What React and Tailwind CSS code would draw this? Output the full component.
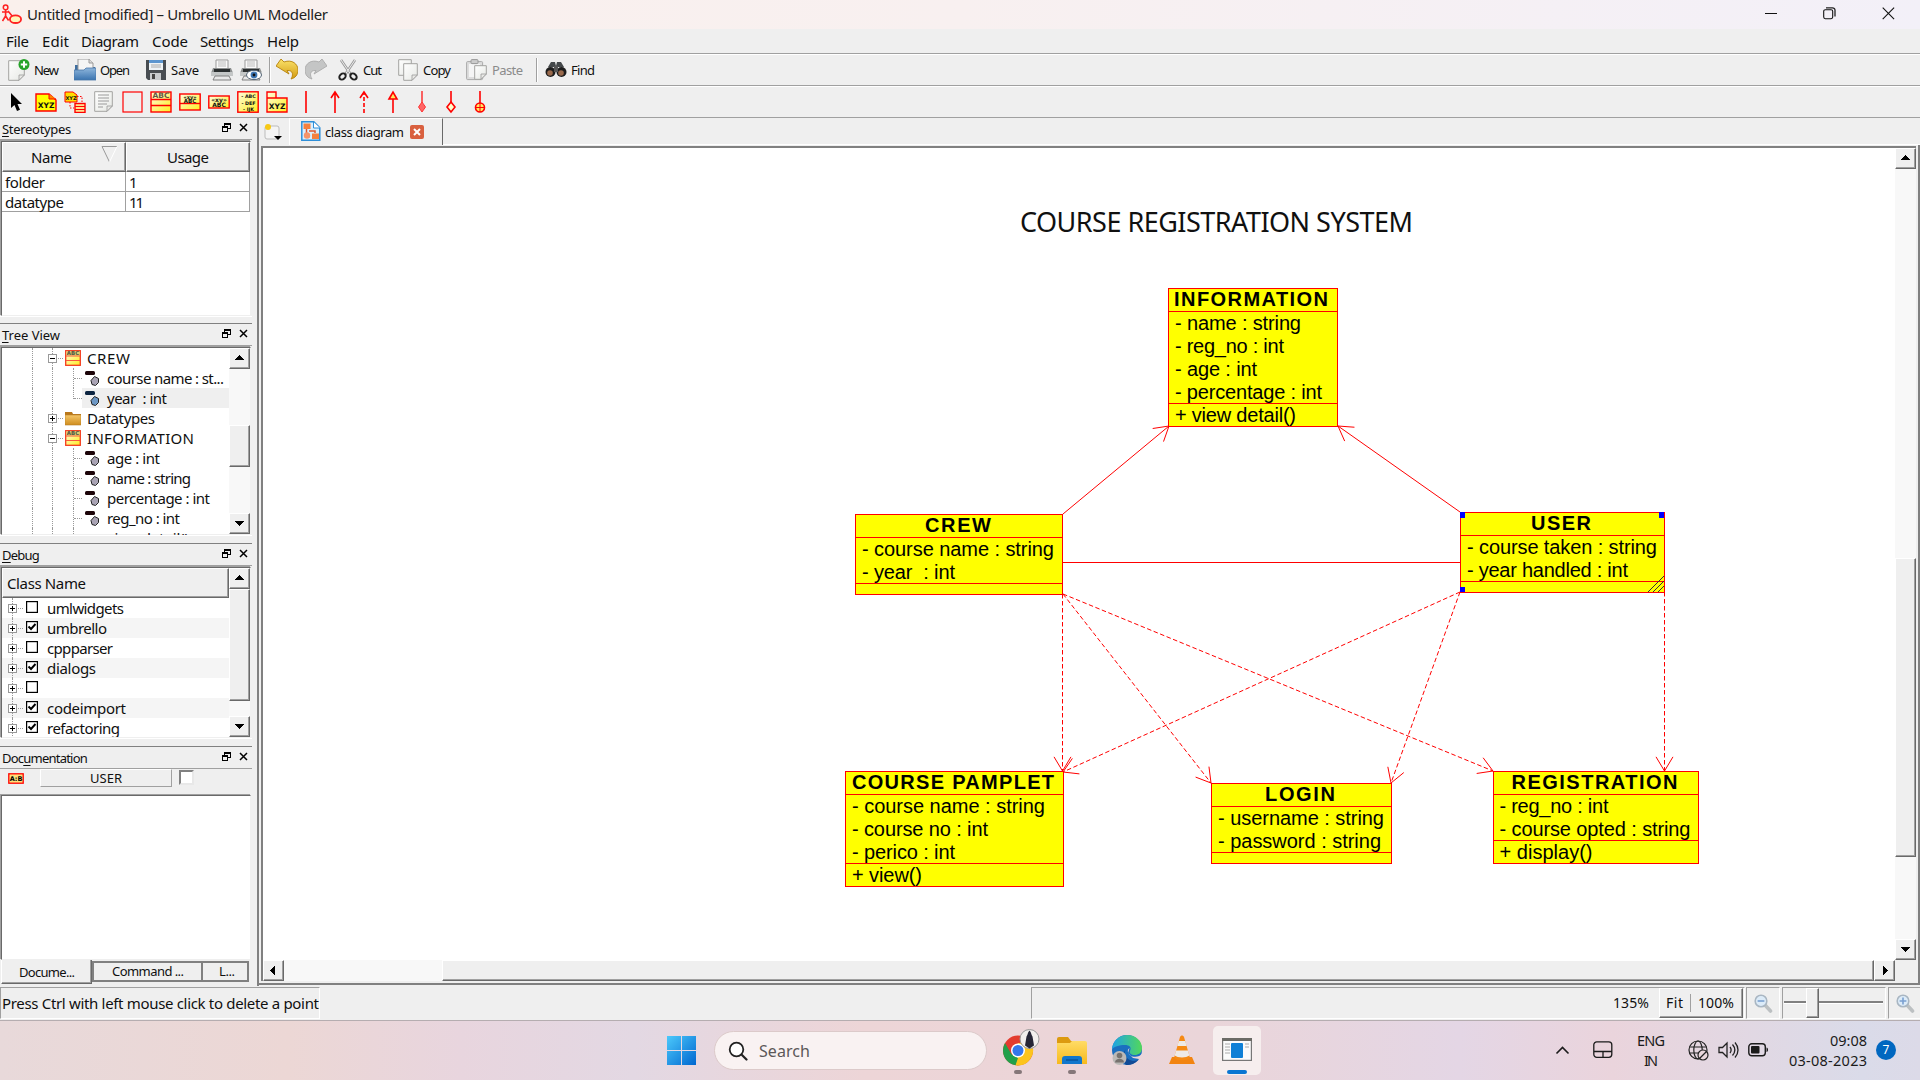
import React, { useLayoutEffect, useRef, useState } from "react";

/* Text run whose tracking is tuned so that it fills exactly `w` pixels. */
function Fit({ w, className = "", children }) {
  const ref = useRef(null);
  const [ls, setLs] = useState(0);
  useLayoutEffect(() => {
    const n = String(children).length;
    const nat = ref.current.getBoundingClientRect().width;
    setLs((w - nat) / Math.max(1, n - 1));
  }, []);
  return (
    <span className={"inline-block shrink-0 whitespace-pre " + className} style={{ width: w }}>
      <span ref={ref} style={{ letterSpacing: ls }}>{children}</span>
    </span>
  );
}

const RAISED = "bg-[#efefef] border border-t-[#fff] border-l-[#fff] border-r-[#696969] border-b-[#696969] shadow-[inset_-1px_-1px_0_#a0a0a0]";
const SUNKEN = "border border-t-[#a0a0a0] border-l-[#a0a0a0] border-r-white border-b-white";
const TRACK = "bg-[#f8f8f8]";

const Tri = ({ dir }) => (
  <svg width="11" height="11" viewBox="0 0 11 11" shapeRendering="crispEdges">
    <path fill="#000" d={{ up: "M5 2h1l4 5H1z", down: "M1 3h9L6 8H5z", left: "M7 1v9L2 6V5z", right: "M4 1v9l5-4V5z" }[dir]} />
  </svg>
);
const Arrow = ({ dir, className = "h-[21px] w-[21px]" }) => (
  <div className={"flex shrink-0 items-center justify-center pr-px pb-px " + RAISED + " " + className}><Tri dir={dir} /></div>
);

/* ---------- toolbar icons ---------- */
const Svg = ({ w = 22, h = 22, ml, children, vb }) => (
  <svg className={"shrink-0 " + (ml || "")} width={w} height={h} viewBox={vb || `0 0 ${w} ${h}`}>{children}</svg>
);
const XYZ = ({ x, y, s = 7, children }) => (
  <text x={x} y={y} fontSize={s} fontWeight="700" fontFamily='"DejaVu Sans"' fill="#111" textAnchor="middle">{children}</text>
);
const ClassIcon = ({ size = 22, ml }) => (
  <Svg w={size} h={size} vb="0 0 22 22" ml={ml}>
    <rect x="1" y="1" width="20" height="20" fill="url(#yl)" stroke="#f00" strokeWidth="1.4" />
    <path d="M1 8.500h20M1 14.500h20" stroke="#f00" strokeWidth="1.300" />
    <text x="11" y="7.300" fontSize="7.500" fontFamily='"DejaVu Sans"' fontWeight="700" fill="#654" textAnchor="middle">ABC</text>
  </Svg>
);
const SmallClass = () => (
  <svg width="16" height="16">
    <rect x=".7" y=".7" width="14.600" height="14.600" fill="url(#yl)" stroke="#f43b1e" strokeWidth="1.300" />
    <path d="M1.400 1.400h13.200v4H1.400z" fill="#d9cf70" /><path d="M1 6h14M1 10.500h14" stroke="#f8593c" />
    <text x="8" y="5.300" fontSize="5.500" fontFamily='"DejaVu Sans"' fontWeight="700" fill="#554" textAnchor="middle">ABC</text>
  </svg>
);
const Page = ({ x = 0, y = 0, w = 16, h = 20 }) => (
  <g transform={`translate(${x} ${y})`}>
    <path d={`M.7 .7H${w - 0.7}V${h - 6}L${w - 6} ${h - 0.7}H.7z`} fill="url(#pg)" stroke="#a3a3a0" />
    <path d={`M${w - 0.7} ${h - 6}h-5.300v5.300z`} fill="#e9e9e6" stroke="#999" strokeWidth=".8" />
  </g>
);
const Printer = () => (
  <g>
    <path d="M5 1h12v9H5z" fill="#fafafa" stroke="#999" />
    <path d="M7 3h8M7 5h8M7 7h8" stroke="#bbb" />
    <path d="M2 9h18l2 5v3H0v-3z" fill="#8d9090" />
    <path d="M0 13h22v4H0z" fill="#c4c7c7" />
    <path d="M3 10h16v3H3z" fill="#2b2f30" />
    <path d="M4 17h14l2 4H2z" fill="#e8e8e8" stroke="#777" strokeWidth=".9" />
  </g>
);
const Magnifier = ({ plus }) => (
  <svg width="19" height="19" viewBox="0 0 19 19">
    <path d="M11 11l5.500 6" stroke="#bcc0c2" strokeWidth="3.600" strokeLinecap="round" />
    <circle cx="7" cy="7" r="5.800" fill="#dcebf8" stroke="#a9b6c2" strokeWidth="1.600" />
    <path d={plus ? "M7 3.600v6.800M3.600 7h6.800" : "M3.600 7h6.800"} stroke="#7aa0d0" strokeWidth="1.600" />
  </svg>
);

function Defs() {
  return (
    <svg width="0" height="0" className="absolute">
      <defs>
        <linearGradient id="yl" x1="0" y1="0" x2="1" y2="1"><stop offset="0" stopColor="#fffde0" /><stop offset="1" stopColor="#ffee20" /></linearGradient>
        <linearGradient id="pg" x1="0" y1="0" x2="1" y2="1"><stop offset="0" stopColor="#fff" /><stop offset="1" stopColor="#e6e8e4" /></linearGradient>
        <linearGradient id="fo" x1="0" y1="0" x2="0" y2="1"><stop offset="0" stopColor="#8fb6dc" /><stop offset="1" stopColor="#3b74b0" /></linearGradient>
        <linearGradient id="un" x1="0" y1="0" x2="0" y2="1"><stop offset="0" stopColor="#fbe36b" /><stop offset="1" stopColor="#d39a10" /></linearGradient>
        <linearGradient id="fy" x1="0" y1="0" x2="0" y2="1"><stop offset="0" stopColor="#f5c668" /><stop offset="1" stopColor="#cf8d1f" /></linearGradient>
        <linearGradient id="wn" x1="0" y1="0" x2="1" y2="1"><stop offset="0" stopColor="#4cc9fb" /><stop offset="1" stopColor="#0067d0" /></linearGradient>
        <linearGradient id="ed" x1="0" y1="0" x2="1" y2="0"><stop offset="0" stopColor="#1fa3e6" /><stop offset="1" stopColor="#52d85a" /></linearGradient>
        <linearGradient id="fw" x1="0" y1="0" x2="0" y2="1"><stop offset="0" stopColor="#ffdc66" /><stop offset="1" stopColor="#f7b91c" /></linearGradient>
      </defs>
    </svg>
  );
}

function TitleBar() {
  return (
    <div className="flex h-[29px] items-center bg-gradient-to-r from-[#faf0ec] via-[#f8f0f0] to-[#f3f0f8] pb-[2px]">
      <Svg w={20} h={20} ml="ml-[2px]">
        <circle cx="3.6" cy="3.4" r="2.3" fill="none" stroke="#f22" strokeWidth="1.5" />
        <path d="M3.6 6v6M0 8h7M3.6 12L.5 17M3.6 12l3 4.500M6 7l5 6" stroke="#f22" strokeWidth="1.6" fill="none" />
        <ellipse cx="13.5" cy="15.2" rx="5.6" ry="3.8" fill="#fff6b8" stroke="#f22" strokeWidth="1.8" />
      </Svg>
      <Fit w={301} className="ml-[5px] text-[15px] leading-[26px] text-[#222]">Untitled [modified] – Umbrello UML Modeller</Fit>
      <div className="ml-auto flex items-center">
        <Svg w={12} h={12} ml="mr-[46px]"><path d="M0 5.500h12" stroke="#111" /></Svg>
        <Svg w={13} h={13} ml="mr-[46px]">
          <rect x=".7" y="2.7" width="9" height="9" rx="1.6" fill="none" stroke="#111" strokeWidth="1.1" />
          <path d="M3 .8h6.500a2.500 2.500 0 0 1 2.500 2.500V9.500" fill="none" stroke="#222" strokeWidth="1.3" />
        </Svg>
        <Svg w={13} h={13} ml="mr-[25px]"><path d="M.7.7l11.400 11.400M12.100.7L.7 12.100" stroke="#111" strokeWidth="1.1" /></Svg>
      </div>
    </div>
  );
}

function MenuBar() {
  const c = "text-[15px] leading-[24px]";
  return (
    <div className="flex h-[24px] pl-[6px]">
      <Fit w={23} className={c}>File</Fit>
      <Fit w={27} className={c + " ml-[13px]"}>Edit</Fit>
      <Fit w={58} className={c + " ml-[12px]"}>Diagram</Fit>
      <Fit w={36} className={c + " ml-[13px]"}>Code</Fit>
      <Fit w={54} className={c + " ml-[12px]"}>Settings</Fit>
      <Fit w={32} className={c + " ml-[13px]"}>Help</Fit>
    </div>
  );
}

function MainToolbar() {
  const c = "text-[13px] leading-[30px]";
  return (
    <div className="flex h-[32px] items-center border-t border-[#a0a0a0] shadow-[inset_0_1px_0_#fff]">
      <Svg ml="ml-[8px]">
        <Page w={17} h={21} y={1} />
        <circle cx="16" cy="5.5" r="5.5" fill="#26a32a" /><path d="M16 2.300v6.400M12.800 5.500h6.400" stroke="#fff" strokeWidth="2" />
      </Svg>
      <Fit w={25} className={c + " ml-[4px]"}>New</Fit>
      <Svg ml="ml-[15px]">
        <path d="M1 6h6l2 2h12v12H1z" fill="#3f6e9f" />
        <path d="M4 0h11l4 4v10H4z" fill="#f5f5f5" stroke="#999" /><path d="M15 0v4h4" fill="#ddd" stroke="#999" />
        <path d="M0 11h10l2-2h10v12H0z" fill="url(#fo)" stroke="#4a77a8" strokeWidth=".8" />
      </Svg>
      <Fit w={30} className={c + " ml-[4px]"}>Open</Fit>
      <Svg w={20} ml="ml-[16px]">
        <path d="M0 1h20v20H2l-2-2z" fill="#484d52" /><path d="M3 1h14v10H3z" fill="#eef3f6" />
        <path d="M3 1h14v3H3z" fill="#5b95cf" /><path d="M5 6h10M5 8h10" stroke="#aaa" />
        <path d="M4 14h11v7H4z" fill="#c9cccf" /><path d="M6 15h3v5H6z" fill="#444" />
      </Svg>
      <Fit w={28} className={c + " ml-[5px]"}>Save</Fit>
      <Svg ml="ml-[12px]"><Printer /></Svg>
      <Svg ml="ml-[7px]"><Printer /><ellipse cx="14" cy="16" rx="7.5" ry="4.6" fill="#fff" stroke="#567" /><circle cx="14" cy="16" r="3.4" fill="#3d76b4" /><circle cx="14" cy="16" r="1.4" fill="#111" /></Svg>
      <span className="ml-[7px] h-[26px] w-[2px] border-l border-[#a0a0a0] bg-white" />
      <Svg ml="ml-[5px]"><path transform="translate(0 -1)" d="M0 8L5 1l3 3c8-3 14 2 14 8 0 5-3 8-7 9 2-3 3-9-4-8.500l2 3.500z" fill="url(#un)" stroke="#b5810a" strokeWidth=".9" /></Svg>
      <Svg ml="ml-[7px]"><path transform="translate(0 -1)" d="M22 8l-5-7-3 3C6 1 0 6 0 12c0 5 3 8 7 9-2-3-3-9 4-8.500L9 16z" fill="#c4c5c5" stroke="#aaa" strokeWidth=".9" /></Svg>
      <Svg w={20} ml="ml-[11px]">
        <path d="M3 1l9.500 14M17 1L7.500 15" stroke="#999" strokeWidth="2.600" /><path d="M3 1l9.500 14M17 1L7.500 15" stroke="#eee" strokeWidth="1" />
        <ellipse cx="4.500" cy="17.500" rx="3.500" ry="2.700" fill="none" stroke="#222" strokeWidth="2" transform="rotate(-40 4.500 17.500)" />
        <ellipse cx="15.500" cy="17.500" rx="3.500" ry="2.700" fill="none" stroke="#222" strokeWidth="2" transform="rotate(40 15.500 17.500)" />
      </Svg>
      <Fit w={19} className={c + " ml-[5px]"}>Cut</Fit>
      <Svg w={20} ml="ml-[16px]"><Page w={14} h={17} /><Page x={5} y={4} w={15} h={18} /></Svg>
      <Fit w={28} className={c + " ml-[5px]"}>Copy</Fit>
      <Svg ml="ml-[15px]">
        <rect x=".6" y="2.6" width="16" height="18" rx="1" fill="#ddd" stroke="#aaa" /><rect x="3" y="5" width="11" height="13" fill="#f5f5f5" />
        <rect x="5" y=".6" width="7" height="4" rx="1" fill="#ccc" stroke="#999" /><Page x={8} y={6} w={13} h={15} />
      </Svg>
      <Fit w={31} className={c + " ml-[4px] text-[#8b8b8b]"}>Paste</Fit>
      <span className="ml-[13px] h-[24px] w-[2px] border-l border-[#a0a0a0] bg-white" />
      <Svg ml="ml-[7px]">
        <path d="M3 8L6 3h4l1 4 1-4h4l3 5z" fill="#44484a" />
        <circle cx="5.500" cy="13" r="5" fill="#1d1d1d" /><circle cx="16.500" cy="13" r="5" fill="#1d1d1d" />
        <circle cx="5" cy="14" r="2.800" fill="#9a6a4c" /><circle cx="16" cy="14" r="2.800" fill="#9a6a4c" /><path d="M9 7h4v6H9z" fill="#555" />
      </Svg>
      <Fit w={24} className={c + " ml-[4px]"}>Find</Fit>
    </div>
  );
}

const Stem = ({ children }) => <Svg w={14} h={24} ml="ml-[15px]">{children}</Svg>;

function UmlToolbar() {
  const r = { stroke: "#f00", strokeWidth: 1.6, fill: "none" };
  return (
    <div className="flex h-[32px] items-center border-t border-[#a0a0a0] shadow-[inset_0_1px_0_#fff]">
      <Svg w={14} h={20} ml="ml-[10px]"><path d="M1 1v15l3.500-3 2.500 6 3-1.300-2.500-5.700H12z" fill="#000" /></Svg>
      <Svg ml="ml-[11px]"><path d="M1 3h13l7 6v11H1z" fill="#ff0" stroke="#f00" strokeWidth="1.400" /><path d="M14 3v5h7" fill="#f80" stroke="#f00" /><XYZ x="11" y="16.500" s="7.500">XYZ</XYZ></Svg>
      <Svg ml="ml-[7px]">
        <path d="M1 1h8l4 3v7H1z" fill="#fd0" stroke="#f00" /><XYZ x="7" y="9" s="5">XYZ</XYZ>
        <path d="M13 5.500h5V12M6 11v6h4" stroke="#f00" strokeDasharray="1.500 1.500" fill="none" />
        <rect x="11" y="12.500" width="10" height="9" fill="#ffdf90" stroke="#f00" strokeWidth="1.400" /><path d="M11 15.500h10M11 18.500h10" stroke="#f00" />
      </Svg>
      <Svg w={19} ml="ml-[8px]"><Page w={19} h={21} /><path d="M4 4h11M4 7h11M4 10h11M4 13h9M4 16h5" stroke="#9a9a9a" /></Svg>
      <Svg w={21} ml="ml-[9px]"><rect x="1" y="1" width="19" height="20" stroke="#f00" strokeWidth="1.200" fill="none" /></Svg>
      <ClassIcon ml="ml-[7px]" />
      <Svg ml="ml-[7px]"><rect x=".8" y="3" width="20.400" height="16" fill="url(#yl)" stroke="#f00" strokeWidth="1.400" /><path d="M1 12.500h20" stroke="#f00" strokeWidth="1.400" /><XYZ x="11" y="7.800" s="5">«xy»</XYZ><XYZ x="11" y="12" s="5.500">ABC</XYZ></Svg>
      <Svg ml="ml-[7px]"><rect x=".8" y="5" width="20.400" height="12" fill="url(#yl)" stroke="#f00" strokeWidth="1.400" /><XYZ x="11" y="10.500" s="6">«xy»</XYZ><XYZ x="11" y="16" s="6">ABC</XYZ></Svg>
      <Svg ml="ml-[7px]"><rect x=".8" y=".8" width="20.400" height="20.400" fill="url(#yl)" stroke="#f00" strokeWidth="1.400" /><XYZ x="11.500" y="7" s="4.800">- ABC</XYZ><XYZ x="11.500" y="13.500" s="4.800">- DEF</XYZ><XYZ x="11.500" y="20" s="4.800">- IJK</XYZ></Svg>
      <Svg ml="ml-[7px]"><path d="M1 1h9v6h11v14H1zM1 7h9" fill="url(#yl)" stroke="#f00" strokeWidth="1.400" /><XYZ x="11" y="18" s="7.500">XYZ</XYZ></Svg>
      <Svg w={14} h={24} ml="ml-[11px]"><path d="M7 1v22" {...r} /></Svg>
      <Stem><path d="M7 23V2M3 8l4-6 4 6" {...r} /></Stem>
      <Stem><path d="M3 8l4-6 4 6" {...r} /><path d="M7 23V2" {...r} strokeDasharray="4 2" /></Stem>
      <Stem><path d="M7 23V9" {...r} /><path d="M3 9l4-7 4 7z" {...r} fill="#ffe860" /></Stem>
      <Stem><path d="M7 1v12" {...r} strokeWidth="1.200" /><path d="M7 12l3.500 5L7 22l-3.500-5z" fill="#f66" stroke="#f33" /></Stem>
      <Stem><path d="M7 1v11" {...r} /><path d="M7 12l4 5-4 5-4-5z" {...r} fill="#ffc" /></Stem>
      <Stem><path d="M7 1v12" {...r} /><circle cx="7" cy="17.500" r="4.500" {...r} fill="#ffe860" /><path d="M7 13v9M2.500 17.500h9" {...r} strokeWidth="1" /></Stem>
    </div>
  );
}

/* ---------- docks ---------- */
const DockTitle = ({ w, a, u, b }) => (
  <div className="flex h-[22px] w-[252px] shrink-0 items-center border-b border-[#a0a0a0] pl-[2px]">
    <DockName w={w} a={a} u={u} b={b} />
    <svg className="ml-auto mb-[3px]" width="9" height="9" viewBox="0 0 9 9" shapeRendering="crispEdges">
      <path d="M2.500 3V.5h6v5H6" fill="none" stroke="#000" /><path d="M2 1h7" stroke="#000" strokeWidth="2" />
      <path d="M.5 4v4.500h5V4z" fill="none" stroke="#000" /><path d="M0 4h6" stroke="#000" strokeWidth="2" />
    </svg>
    <svg className="mb-[3px] ml-[8px] mr-[4px]" width="9" height="9" viewBox="0 0 9 9"><path d="M1 1l7 7M8 1L1 8" stroke="#000" strokeWidth="1.500" /></svg>
  </div>
);
function DockName({ w, a, u, b }) {
  const ref = useRef(null);
  const [ls, setLs] = useState(0);
  useLayoutEffect(() => {
    setLs((w - ref.current.getBoundingClientRect().width) / (a + u + b).length);
  }, []);
  return (
    <span ref={ref} className="whitespace-pre text-[13px] leading-[20px]" style={{ letterSpacing: ls }}>
      {a}<span className="underline underline-offset-2">{u}</span>{b}
    </span>
  );
}
const FRAME = "border border-t-[#696969] border-l-[#696969] border-r-[#efefef] border-b-[#efefef] shadow-[-1px_-1px_0_#a0a0a0] bg-white";
const Split = ({ h }) => <div className={"shrink-0 border-b border-[#808080] shadow-[inset_0_1px_0_#fff] w-[252px] " + h} />;

function Stereotypes() {
  const th = "flex h-[30px] items-center text-[15px] " + RAISED;
  const td = "h-full border-r border-b border-[#a0a0a0] pl-[3px] text-[15px] leading-[20px]";
  return (
    <>
      <DockTitle w={69} a="" u="S" b="tereotypes" />
      <div className={"ml-[1px] mt-[1px] h-[175px] w-[250px] shrink-0 " + FRAME}>
        <div className="flex w-[248px]">
          <div className={th + " w-[124px] pl-[28px]"}>
            <Fit w={41}>Name</Fit>
            <svg className="ml-[29px] mb-[6px]" width="17" height="17"><path d="M8.500 16L1 .5h15" fill="none" stroke="#999" /><path d="M16 .5L8.500 16" stroke="#fff" /></svg>
          </div>
          <div className={th + " w-[124px] pl-[40px]"}><Fit w={42}>Usage</Fit></div>
        </div>
        <div className="flex h-[20px]"><div className={td + " w-[124px]"}><Fit w={40}>folder</Fit></div><div className={td + " w-[124px]"}>1</div></div>
        <div className="flex h-[20px]"><div className={td + " w-[124px]"}><Fit w={59}>datatype</Fit></div><div className={td + " w-[124px]"}><Fit w={15}>11</Fit></div></div>
      </div>
    </>
  );
}

const Expander = ({ plus }) => (
  <svg className="shrink-0" width="9" height="9" shapeRendering="crispEdges"><rect x=".5" y=".5" width="8" height="8" fill="#fff" stroke="#999" /><path d={plus ? "M2 4.500h5M4.500 2v5" : "M2 4.500h5"} stroke="#000" /></svg>
);
const Attr = ({ sel, op }) => (
  <svg className="ml-[3px] shrink-0" width="15" height="17">
    {!op && <rect x="0" y="1" width="10" height="4" rx="1.500" fill={sel ? "#0c2440" : "#1c0408"} />}
    {op
      ? <path d="M9.500 5.500l4 3v4l-3 3-3.500-1-1-5z" fill="#f3e04a" stroke="#222" />
      : <path d="M9.500 6.500l4 2v4l-3 3-3.500-1-1-4z" fill={sel ? "#6d97c4" : "#a9a3b4"} stroke="#222" />}
  </svg>
);
const DOT = "border-dotted border-[#999]";
function Leaf({ w, t, sel, last, op }) {
  return (
    <div className="flex h-[20px] items-center">
      <span className={"h-full w-[20px] shrink-0 border-r ml-[11px] " + DOT} />
      <span className={"h-full w-[20px] shrink-0 border-r " + DOT} />
      <span className="h-full w-[20px] shrink-0" />
      <span className={"flex w-[9px] shrink-0 flex-col border-l " + DOT + (last ? " h-[11px] self-start" : " h-full")}><span className={"h-[11px] w-full border-b " + DOT} /></span>
      <span className={"flex h-full grow items-center " + (sel ? "bg-[#efefef]" : "")}>
        <Attr sel={sel} op={op} />
        <Fit w={w} className="ml-[7px] text-[15px] leading-[20px]">{t}</Fit>
      </span>
    </div>
  );
}
function Node({ w, t, plus, icon }) {
  return (
    <div className="flex h-[20px] items-center">
      <span className={"ml-[11px] h-full w-[20px] shrink-0 border-r " + DOT} />
      <span className="flex h-full w-[24px] shrink-0 flex-col items-end">
        <span className={"mr-[4px] h-[6px] border-l " + DOT} /><Expander plus={plus} /><span className={"mr-[4px] grow border-l " + DOT} />
      </span>
      <span className={"ml-[1px] w-[5px] border-b " + DOT} />
      <span className="ml-[2px] flex w-[16px]">{icon}</span>
      <Fit w={w} className="ml-[6px] text-[15px] leading-[20px]">{t}</Fit>
    </div>
  );
}
const FolderIcon = () => (
  <svg width="17" height="15"><path d="M0 1h7l1 2h8v11H0z" fill="#b9771a" /><path d="M0 4h16v10H0z" fill="url(#fy)" stroke="#b88228" strokeWidth=".6" /></svg>
);

function TreeView() {
  return (
    <>
      <DockTitle w={58} a="" u="T" b="ree View" />
      <div className={"ml-[1px] mt-[1px] flex h-[188px] w-[250px] shrink-0 " + FRAME}>
        <div className="h-[187px] w-[227px] overflow-hidden">
          <Node w={43} t="CREW" icon={<SmallClass />} />
          <Leaf w={117} t="course name : st..." />
          <Leaf w={60} t="year  : int" sel last />
          <Node w={68} t="Datatypes" plus icon={<FolderIcon />} />
          <Node w={107} t="INFORMATION" icon={<SmallClass />} />
          <Leaf w={53} t="age : int" />
          <Leaf w={84} t="name : string" />
          <Leaf w={103} t="percentage : int" />
          <Leaf w={73} t="reg_no : int" />
          <Leaf w={82} t="view detail()" op />
        </div>
        <div className={"flex w-[21px] shrink-0 flex-col " + TRACK}>
          <Arrow dir="up" />
          <div className={"mt-[56px] h-[42px] " + RAISED} />
          <Arrow dir="down" className="mt-auto h-[21px] w-[21px]" />
        </div>
      </div>
    </>
  );
}

const Check = ({ on }) => (
  <svg className="mb-[3px] shrink-0" width="12" height="12"><rect x=".6" y=".6" width="10.800" height="10.800" fill="#fff" stroke="#000" strokeWidth="1.200" />{on && <path d="M2.500 5.500L5 8l4.500-5" stroke="#000" strokeWidth="1.900" fill="none" />}</svg>
);
const DEBUG = [["umlwidgets", 77, 0], ["umbrello", 60, 1], ["cppparser", 66, 0], ["dialogs", 49, 1], ["", 0, 0], ["codeimport", 79, 1], ["refactoring", 73, 1]];
function Debug() {
  return (
    <>
      <DockTitle w={37} a="" u="D" b="ebug" />
      <div className={"ml-[1px] mt-[1px] flex h-[171px] w-[250px] shrink-0 overflow-hidden " + FRAME}>
        <div className="w-[227px]">
          <div className={"flex h-[30px] items-center pl-[4px] text-[15px] " + RAISED}><Fit w={79}>Class Name</Fit></div>
          {DEBUG.map(([t, w, on], i) => (
            <div key={i} className={"flex h-[20px] items-center pl-[6px] " + (i % 2 ? "bg-[#f5f5f5]" : "bg-white")}>
              <span className="flex h-full flex-col items-center">
                <span className={"h-[6px] border-l " + DOT} /><Expander plus /><span className={"grow border-l " + DOT} />
              </span>
              <span className={"ml-[1px] mr-[3px] w-[5px] border-b " + DOT} />
              <Check on={on} />
              {t && <Fit w={w} className="ml-[9px] text-[15px] leading-[20px]">{t}</Fit>}
            </div>
          ))}
        </div>
        <div className={"flex w-[21px] shrink-0 flex-col " + TRACK}>
          <Arrow dir="up" />
          <div className={"h-[112px] " + RAISED} />
          <Arrow dir="down" className="mt-auto h-[21px] w-[21px]" />
        </div>
      </div>
    </>
  );
}

function Documentation() {
  return (
    <>
      <DockTitle w={85} a="Doc" u="u" b="mentation" />
      <div className="flex h-[26px] shrink-0 items-start">
        <svg className="ml-[8px] mt-[4px]" width="16" height="11"><rect x=".8" y=".8" width="14.400" height="9.400" fill="#ffe27a" stroke="#f00" strokeWidth="1.300" /><text x="8" y="8" fontSize="6.500" fontWeight="700" textAnchor="middle" fontFamily='"DejaVu Sans"'>A:B</text></svg>
        <div className="ml-[16px] flex h-[18px] w-[132px] items-center justify-center border border-t-white border-l-white border-r-[#a0a0a0] border-b-[#a0a0a0]"><Fit w={32} className="text-[13px] leading-[16px]">USER</Fit></div>
        <div className="ml-[7px] mt-[1px] h-[15px] w-[15px] border-2 border-t-[#808080] border-l-[#808080] border-r-[#e8e8e8] border-b-[#e8e8e8] bg-white" />
      </div>
      <div className={"ml-[1px] h-[165px] w-[250px] shrink-0 " + FRAME} />
      <div className="flex h-[25px] items-start text-[13px]">
        <div className="ml-[1px] h-[24px] w-[91px] border-r border-b border-[#696969] border-l border-l-white pl-[17px] leading-[25px] shadow-[inset_-1px_-1px_0_#a0a0a0]"><Fit w={56}>Docume...</Fit></div>
        <div className="mt-[1px] h-[21px] w-[111px] border-2 border-[#808080] pl-[18px] leading-[17px]"><Fit w={72}>Command ...</Fit></div>
        <div className="mt-[1px] h-[21px] w-[46px] border-2 border-l-0 border-[#808080] pl-[16px] leading-[17px]"><Fit w={16}>L...</Fit></div>
      </div>
    </>
  );
}

/* ---------- canvas ---------- */
const BOXES = [
  { x: 1168, y: 287.5, w: 169, h: 138, t: ["INFORMATION", 154, 6], a: [["- name : string", 126], ["- reg_no : int", 109], ["- age : int", 82], ["- percentage : int", 147]], o: [["+ view detail()", 121]] },
  { x: 855, y: 513.5, w: 207, h: 80, t: ["CREW", 66, 70], a: [["- course name : string", 192], ["- year  : int", 93]], o: [] },
  { x: 1460, y: 512, w: 204, h: 80, t: ["USER", 60, 71], a: [["- course taken : string", 190], ["- year handled : int", 161]], o: [] },
  { x: 845, y: 771, w: 218, h: 115, t: ["COURSE PAMPLET", 202, 7], a: [["- course name : string", 193], ["- course no : int", 136], ["- perico : int", 103]], o: [["+ view()", 70]] },
  { x: 1211, y: 783, w: 180, h: 80, t: ["LOGIN", 70, 54], a: [["- username : string", 166], ["- password : string", 163]], o: [] },
  { x: 1492.5, y: 771, w: 205, h: 92, t: ["REGISTRATION", 166, 19], a: [["- reg_no : int", 109], ["- course opted : string", 191]], o: [["+ display()", 93]] },
];
const LINKS = [
  [1063, 514, 1169, 426, 0], [1460, 512, 1338, 426, 0],
  [1062.5, 594, 1062.5, 771, 1], [1063, 594, 1211, 783, 1], [1063, 594, 1493, 771, 1],
  [1460, 592, 1063, 772, 1], [1460, 592, 1391, 783, 1], [1664.5, 592, 1664.5, 771, 1],
];
function head([x1, y1, x2, y2]) {
  const a = Math.atan2(y1 - y2, x1 - x2);
  const p = (d) => `${x2 + 16.5 * Math.cos(a + d)} ${y2 + 16.5 * Math.sin(a + d)}`;
  return `M${p(0.54)}L${x2} ${y2}L${p(-0.54)}`;
}
function ClassBox({ b }) {
  return (
    <div className="absolute border border-[#f00] bg-[#ff0] text-[20px] text-black" style={{ left: b.x - 263, top: b.y - 148, width: b.w + 1, height: b.h + 1, fontFamily: '"Liberation Sans"' }}>
      <div className="h-[23px] border-b border-[#f00] font-bold leading-[21px]" style={{ paddingLeft: b.t[2] - 1 }}><Fit w={b.t[1]}>{b.t[0]}</Fit></div>
      <div className="border-b border-[#f00]" style={{ height: b.a.length * 23 }}>
        {b.a.map(([t, w]) => <div key={t} className="h-[23px] pl-[6px] leading-[23px]"><Fit w={w}>{t}</Fit></div>)}
      </div>
      {b.o.map(([t, w]) => <div key={t} className="h-[22px] pl-[6px] leading-[22px]"><Fit w={w}>{t}</Fit></div>)}
    </div>
  );
}
function Canvas() {
  return (
    <div className="relative h-[812px] w-[1632px] overflow-hidden bg-white">
      <div className="absolute left-[757px] top-[54px] text-[27px] leading-[40px]"><Fit w={393}>COURSE REGISTRATION SYSTEM</Fit></div>
      {BOXES.map((b) => <ClassBox key={b.t[0]} b={b} />)}
      <svg className="absolute left-0 top-0" width="1632" height="812" viewBox="263 148 1632 812" fill="none" stroke="#f00">
        <path d="M1063 562.500H1460" strokeWidth="1.200" />
        {LINKS.map((l, i) => (
          <g key={i}><path d={`M${l[0]} ${l[1]}L${l[2]} ${l[3]}`} strokeDasharray={l[4] ? "4.500 2.500" : undefined} /><path d={head(l)} /></g>
        ))}
        <path d="M1648 592l16-16M1653 592l11-11M1658 592l6-6" stroke="#333" />
        <path d="M1460 512h5v6h-5zM1659 512h5v6h-5zM1460 587h5v5h-5z" fill="#00f" stroke="none" />
      </svg>
    </div>
  );
}

function Workspace() {
  return (
    <div className="flex w-[1663px] flex-col border-l-2 border-[#808080]">
      <div className="flex h-[27px] shrink-0">
        <svg className="ml-[5px] mt-[5px]" width="18" height="19">
          <rect x="1" y="3" width="14" height="13" rx="2" fill="#f4f4f4" stroke="#bbb" /><circle cx="4" cy="4" r="3" fill="#f7c915" /><path d="M10 13h8l-4 4z" fill="#000" />
        </svg>
        <div className="ml-[7px] flex h-[27px] w-[154px] items-center border-r border-[#696969] border-l border-l-white border-t border-t-white">
          <svg className="ml-[11px] mt-[-2px]" width="20" height="20">
            <path d="M.8.8h12l6 6v12.400H.8z" fill="#d9efff" stroke="#2f8fd8" strokeWidth="1.500" /><path d="M12.500 1v6H19" fill="#fff" stroke="#2f8fd8" />
            <rect x="2.500" y="2.500" width="7" height="5.500" fill="#f5803e" /><rect x="11" y="12.500" width="7" height="5.500" fill="#f5803e" /><path d="M5.500 8v7.500H9M14 12v-2H8" stroke="#e0552b" strokeWidth="1.500" fill="none" /><circle cx="6" cy="14.500" r="3.200" fill="#f5946a" />
          </svg>
          <Fit w={79} className="ml-[4px] text-[13px] leading-[24px]">class diagram</Fit>
          <svg className="ml-[6px]" width="14" height="14"><rect width="14" height="14" rx="2" fill="#d9603f" /><path d="M4 4l6 6M10 4l-6 6" stroke="#fff" strokeWidth="2" /></svg>
        </div>
        <div className="grow border-b border-white" />
      </div>
      <div className="flex h-[840px] w-[1661px] border-r-2 border-b-2 border-[#808080]">
        <div className="ml-[2px] mt-[1px] flex h-[835px] w-[1655px] flex-col border-t-2 border-l-2 border-[#808080]">
          <div className="flex h-[812px]">
            <Canvas />
            <div className={"flex w-[21px] shrink-0 flex-col " + TRACK}>
              <Arrow dir="up" />
              <div className={"mt-[389px] h-[299px] " + RAISED} />
              <Arrow dir="down" className="mt-auto h-[21px] w-[21px]" />
            </div>
          </div>
          <div className="flex h-[21px]">
            <div className={"flex w-[1632px] shrink-0 " + TRACK}>
              <Arrow dir="left" />
              <div className={"ml-[158px] w-[1432px] " + RAISED} />
              <Arrow dir="right" />
            </div>
          </div>
        </div>
      </div>
    </div>
  );
}

function StatusBar() {
  return (
    <div className="flex h-[35px] shrink-0 border-b border-[#b5adb0] pt-[1px] text-[15px]">
      <div className={"h-[32px] w-[320px] shrink-0 pl-[1px] leading-[31px] " + SUNKEN}><Fit w={317}>Press Ctrl with left mouse click to delete a point</Fit></div>
      <div className={"ml-[711px] flex h-[32px] w-[714px] shrink-0 pl-[581px] leading-[30px] " + SUNKEN}>
        <Fit w={36} className="text-[14px]">135%</Fit>
        <div className={"ml-[10px] flex h-[30px] w-[84px] items-center pl-[6px] text-[14px] " + RAISED}>
          <Fit w={17}>Fit</Fit><span className="ml-[7px] mr-[7px] h-[18px] w-px bg-[#a0a0a0]" /><Fit w={36}>100%</Fit>
        </div>
      </div>
      <div className={"ml-[1px] flex h-[32px] w-[34px] shrink-0 items-center justify-center " + SUNKEN}><Magnifier /></div>
      <div className={"ml-[2px] flex h-[32px] w-[104px] shrink-0 items-center pl-[1px] " + SUNKEN}>
        <span className="mb-[1px] h-[3px] w-[22px] shrink-0 border-t-2 border-b border-t-[#808080] border-b-white" />
        <span className={"h-[30px] w-[13px] shrink-0 " + RAISED} />
        <span className="mb-[1px] h-[3px] w-[64px] shrink-0 border-t-2 border-b border-t-[#808080] border-b-white" />
      </div>
      <div className={"ml-[2px] flex h-[32px] w-[34px] shrink-0 items-center pl-[7px] " + SUNKEN}><Magnifier plus /></div>
    </div>
  );
}

function Taskbar() {
  const dot = "h-[4px] w-[8px] rounded-full bg-[#857779]";
  const slot = "flex h-[59px] flex-col items-center";
  return (
    <div className="flex h-[59px] shrink-0 bg-[linear-gradient(90deg,#e8d9da_0%,#ecd7d5_15%,#e8d5de_24%,#e3d8e3_33%,#edd5d7_45%,#ead5d9_63%,#e4d6e5_76%,#ead4dc_84%,#dadbe9_97%,#dcdae8_100%)] text-[15px] text-[#1b1b1b]">
      <svg className="ml-[667px] mt-[15px]" width="29" height="29"><path d="M0 0h14v14H0zM15 0h14v14H15zM0 15h14v14H0zM15 15h14v14H15z" fill="url(#wn)" /></svg>
      <div className="ml-[18px] mt-[10px] flex h-[39px] w-[273px] items-center rounded-full border border-[#dccaca] bg-[#f9f2f2]">
        <svg className="ml-[13px]" width="20" height="20"><circle cx="8.500" cy="8.500" r="6.800" fill="#fff" stroke="#222" strokeWidth="1.800" /><path d="M13.500 13.500l5 5" stroke="#222" strokeWidth="2.200" strokeLinecap="round" /></svg>
        <Fit w={51} className="ml-[11px] text-[16px] text-[#5c5858]">Search</Fit>
      </div>
      <div className={slot + " ml-[13px] w-[42px]"}>
        <svg className="mt-[6px]" width="42" height="40">
          <circle cx="18" cy="23.500" r="15" fill="#e33b2e" />
          <path d="M18 23.500h0L15.500 38.300A15 15 0 0 0 31 16H18z" fill="#fcc41d" /><path d="M18 23.500L5 16l6.500 11.300L18 31l-2.500 7.300A15 15 0 0 1 5 16z" fill="#22a04a" />
          <circle cx="18" cy="23.500" r="7" fill="#fff" /><circle cx="18" cy="23.500" r="5.500" fill="#3577ea" />
          <circle cx="29.500" cy="12" r="9.500" fill="#f2efed" stroke="#999" /><path d="M29.500 3.500c2 2 1.500 4 3 6l1.500 9-4.500 3-4.500-3 1.500-9c1.500-2 1-4 3-6z" fill="#262636" />
        </svg>
        <span className={dot + " mt-[3px] mr-[6px]"} />
      </div>
      <div className={slot + " ml-[15px] w-[30px]"}>
        <svg className="mt-[15px]" width="30" height="29"><path d="M0 3a2 2 0 0 1 2-2h9l3 4h14v10H0z" fill="#dc9a10" /><path d="M0 7h13l2-2h13a2 2 0 0 1 2 2v21H0z" fill="url(#fw)" /><path d="M5 28v-5a3 3 0 0 1 3-3h14a3 3 0 0 1 3 3v5z" fill="#1277cc" /><path d="M9 24h12" stroke="#0a549c" strokeWidth="1.500" /></svg>
        <span className={dot + " mt-[5px]"} />
      </div>
      <svg className="ml-[25px] mt-[14px]" width="30" height="31">
        <circle cx="15" cy="15" r="15" fill="#1b6fc0" /><path d="M0 14C1 5 8 0 15 0c9 0 15 6 15 13 0 5-4 7-7 7-4 0-6-2-5-4 2-4-1-6-5-6C7 10 2 12 0 14z" fill="url(#ed)" />
        <path d="M14 14c-3 4 0 11 7 12 3 0 6-1 7-3 0 0-5 8-14 7-4-3-4-12 0-16z" fill="#114b96" /><path d="M17.500 13c-3 2-2 7 3 8.500 4 1 8-.500 9.500-3l1 5-4 .500-6-1-5-5z" fill="#ead5d9" />
        <circle cx="7.500" cy="23" r="7" fill="#bcb9b7" /><circle cx="7.500" cy="20.500" r="2.800" fill="#77726f" /><path d="M3 27.500c0-5 9-5 9 0z" fill="#77726f" />
      </svg>
      <svg className="ml-[27px] mt-[14px]" width="28" height="31"><path d="M3 22h20l3 7H0z" fill="#f28410" /><path d="M11 2c1-2 3-2 4 0l6 21c-3 3-13 3-16 0z" fill="#f58a14" /><path d="M9.800 6h6.400l1.500 5H8.300zM7 15.500h12l1.300 5c-3 2.500-11.600 2.500-14.600 0z" fill="#eeeae6" /></svg>
      <div className="ml-[16px] mt-[5px] flex h-[49px] w-[48px] flex-col items-center rounded-[5px] bg-[#f6eeee]">
        <svg className="mt-[12px]" width="30" height="23"><rect x=".6" y=".6" width="28.800" height="21.800" fill="#fbfbfb" stroke="#777" strokeWidth="1.200" /><path d="M0 0h30v3H0z" fill="#6b6b66" /><path d="M3 6h5M3 9h5M3 12h5M3 15h5M23 6h4M23 9h4" stroke="#aaa" /><rect x="9" y="5" width="12" height="15" rx="1" fill="#0f80d6" /></svg>
        <span className="mt-[9px] h-[4px] w-[20px] rounded-full bg-[#0a76d2]" />
      </div>
      <div className="ml-[294px] flex h-[58px] items-center">
        <svg width="15" height="12"><path d="M1.500 9.500l6-6 6 6" fill="none" stroke="#1b1b1b" strokeWidth="1.600" /></svg>
        <svg className="ml-[23px]" width="20" height="18"><rect x=".8" y=".8" width="18" height="15.500" rx="3" fill="none" stroke="#1b1b1b" strokeWidth="1.300" /><path d="M1 10.500h18M10 10.500v6" stroke="#1b1b1b" strokeWidth="1.300" /></svg>
        <div className="ml-[23px] flex w-[30px] flex-col items-center text-[14.500px] leading-[20px]"><Fit w={28}>ENG</Fit><Fit w={14}>IN</Fit></div>
        <svg className="ml-[22px]" width="21" height="21" fill="none" stroke="#222" strokeWidth="1.200"><circle cx="10" cy="10" r="9" /><ellipse cx="10" cy="10" rx="4.200" ry="9" /><path d="M1.500 7h17M1.500 13h17" /><circle cx="15" cy="15" r="5" fill="#e9d6dc" /><path d="M11.500 18.500l7-7" /></svg>
        <svg className="ml-[9px]" width="21" height="20" fill="none" stroke="#222" strokeWidth="1.300"><path d="M1 7.500h3.500L9 3v14l-4.500-4.500H1z" /><path d="M12 7c1.500 2 1.500 4 0 6M14.500 4.500c3 3.500 3 7.500 0 11M17 2.500c4 4.500 4 10.500 0 15" /></svg>
        <svg className="ml-[9px]" width="21" height="14"><rect x=".8" y=".8" width="16.500" height="12" rx="3" fill="none" stroke="#1b1b1b" strokeWidth="1.400" /><rect x="3" y="3" width="8.500" height="7.600" rx="1" fill="#1b1b1b" /><path d="M18.500 4.500c2 0 2 4.500 0 4.500z" fill="#1b1b1b" /></svg>
        <div className="ml-[19px] flex w-[79px] flex-col items-end text-[14.500px] leading-[20px]"><Fit w={37}>09:08</Fit><Fit w={78}>03-08-2023</Fit></div>
        <span className="ml-[9px] flex h-[20px] w-[20px] items-center justify-center rounded-full bg-[#0067c0] text-[12px] text-white">7</span>
      </div>
    </div>
  );
}

export default function App() {
  return (
    <div className="flex h-[1080px] w-[1920px] flex-col overflow-hidden bg-[#efefef] font-['Noto_Sans',sans-serif] text-[#101010]">
      <Defs />
      <TitleBar />
      <MenuBar />
      <MainToolbar />
      <UmlToolbar />
      <div className="flex h-[869px] shrink-0 border-t border-[#a0a0a0]">
        <div className="flex h-[868px] w-[257px] shrink-0 flex-col">
          <Stereotypes />
          <Split h="h-[8px]" />
          <TreeView />
          <Split h="h-[9px]" />
          <Debug />
          <Split h="h-[9px]" />
          <Documentation />
        </div>
        <Workspace />
      </div>
      <StatusBar />
      <Taskbar />
    </div>
  );
}
